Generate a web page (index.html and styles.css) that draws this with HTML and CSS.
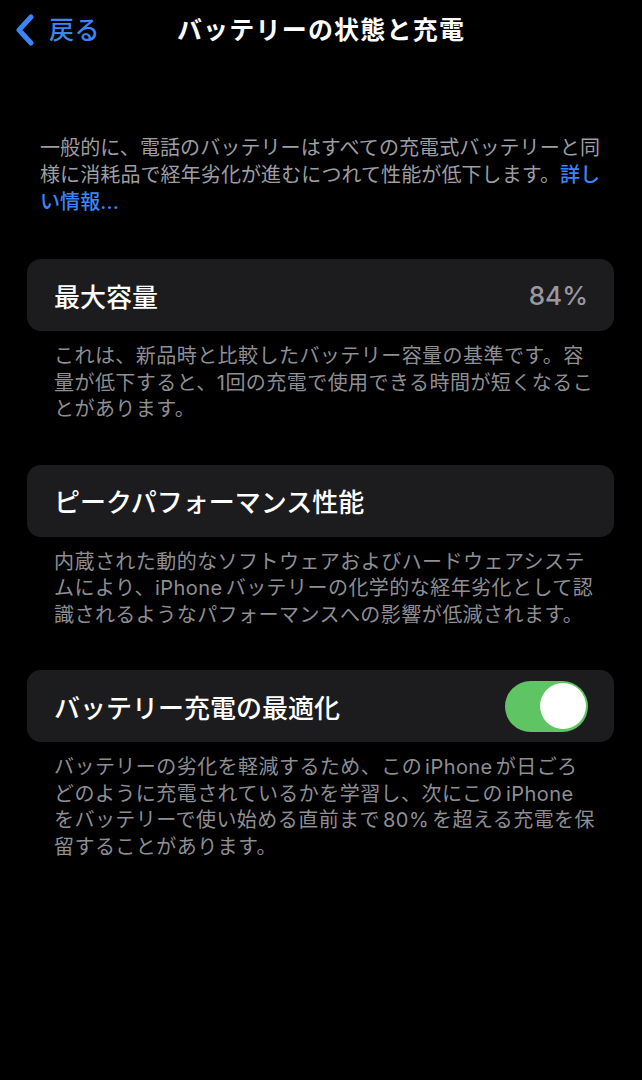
FILE: index.html
```html
<!DOCTYPE html>
<html lang="ja">
<head>
<meta charset="utf-8">
<title>バッテリーの状態と充電</title>
<link rel="stylesheet" href="styles.css">
</head>
<body>
<header class="nav">
  <a class="back" href="#">
    <svg class="chev" width="22" height="32" viewBox="0 0 22 32"><path d="M17 3 L5 16 L17 29" fill="none" stroke="#3a86f7" stroke-width="5" stroke-linecap="round" stroke-linejoin="round"/></svg>
    <span class="back-label">戻る</span>
  </a>
  <h1 class="title">バッテリーの状態と充電</h1>
</header>
<main class="content">
  <p class="intro">一般的に、電話のバッテリーはすべての充電式バッテリーと同様に消耗品で経年劣化が進むにつれて性能が低下します。<a class="link" href="#">詳しい情報...</a></p>

  <section class="group">
    <div class="card">
      <span class="label">最大容量</span>
      <span class="value">84%</span>
    </div>
    <p class="footer">これは、新品時と比較したバッテリー容量の基準です。容<br>量が低下すると、1回の充電で使用できる時間が短くなるこ<br>とがあります。</p>
  </section>

  <section class="group">
    <div class="card">
      <span class="label">ピークパフォーマンス性能</span>
    </div>
    <p class="footer">内蔵された動的なソフトウェアおよびハードウェアシステ<br>ムにより、<span class="en-r">iPhone</span>バッテリーの化学的な経年劣化として認<br>識されるようなパフォーマンスへの影響が低減されます。</p>
  </section>

  <section class="group">
    <div class="card">
      <span class="label">バッテリー充電の最適化</span>
      <span class="toggle"><span class="thumb"></span></span>
    </div>
    <p class="footer">バッテリーの劣化を軽減するため、この<span class="en">iPhone</span>が日ごろ<br>どのように充電されているかを学習し、次にこの<span class="en">iPhone</span><br>をバッテリーで使い始める直前まで<span class="en">80%</span>を超える充電を保<br>留することがあります。</p>
  </section>
</main>
</body>
</html>
```
FILE: styles.css
```css
html, body {
  margin: 0;
  padding: 0;
  background: #000;
}
body {
  width: 642px;
  min-height: 1080px;
  font-family: "Inter", "Noto Sans CJK JP", sans-serif;
  color: #fff;
}
.nav {
  position: relative;
  height: 60px;
  display: flex;
  align-items: center;
  justify-content: center;
}
.back {
  position: absolute;
  left: 14px;
  top: 14px;
  display: flex;
  align-items: center;
  gap: 13px;
  text-decoration: none;
  color: #3a86f7;
}
.chev { display: block; }
.back-label {
  font-size: 25px;
  font-weight: 500;
  line-height: 32px;
  letter-spacing: 0.5px;
}
.title {
  margin: 0;
  font-size: 25px;
  font-weight: 700;
  line-height: 32px;
  letter-spacing: 1.2px;
  color: #fff;
}
.content {
  padding: 0 28px 0 27px;
}
.intro {
  margin: 75px 0 0;
  padding: 0 10px 0 13px;
  font-size: 20px;
  line-height: 27px;
  color: #9d9da2;
  letter-spacing: 0.1px;
}
.link {
  color: #3a86f7;
  text-decoration: none;
  font-weight: 500;
}
.group {
  margin-top: 42px;
}
.intro + .group {
  margin-top: 43px;
}
.card {
  height: 72px;
  background: #1c1c1e;
  border-radius: 14px;
  display: flex;
  align-items: center;
  justify-content: space-between;
  padding: 0 26px 0 27px;
}
.label {
  font-size: 26px;
  font-weight: 500;
  color: #fff;
}
.value {
  font-size: 26px;
  font-weight: 500;
  color: #98989e;
}
.toggle {
  width: 83px;
  height: 51px;
  border-radius: 26px;
  background: #5fc463;
  display: flex;
  align-items: center;
  justify-content: flex-end;
  padding: 0 2px;
  box-sizing: border-box;
}
.thumb {
  width: 46px;
  height: 46px;
  border-radius: 50%;
  background: #fff;
}
.footer {
  margin: 12px 0 0;
  padding: 0 0 0 27px;
  font-size: 20px;
  line-height: 26.5px;
  letter-spacing: 0.45px;
  color: #8e8e93;
  white-space: nowrap;
}
.en {
  margin: 0 3px;
}
.en-r {
  margin-right: 3px;
}
```
